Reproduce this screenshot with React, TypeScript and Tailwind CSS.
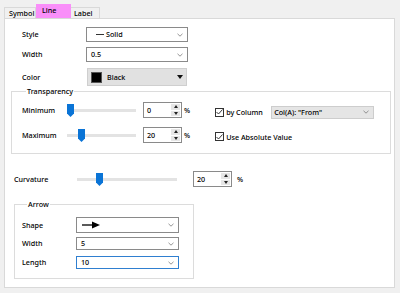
import React from "react";

const Chevron = () => (
  <svg width="6" height="4" viewBox="0 0 6 4" className="shrink-0">
    <path d="M0.5 0.8 L3 3.2 L5.5 0.8" fill="none" stroke="#7a7a7a" strokeWidth="0.8" />
  </svg>
);

function Dropdown({ w, h, children, focused }: { w: string; h: string; children: React.ReactNode; focused?: boolean }) {
  return (
    <div
      className={`flex items-center justify-between bg-white border pl-[3px] pr-[4px] ${w} ${h} ${
        focused ? "border-[#2f7fd0]" : "border-[#8a8a8a]"
      }`}
    >
      <div className="flex items-center">{children}</div>
      <Chevron />
    </div>
  );
}

function Slider({ w, pos }: { w: string; pos: string }) {
  return (
    <div className={`relative h-[16px] flex items-center ${w}`}>
      <div className="w-full h-[3px] bg-[#e3e3e3]" />
      <svg width="7" height="13" viewBox="0 0 7 13" className={`absolute top-[2px] ${pos}`}>
        <path d="M0 0 H7 V9.5 L3.5 13 L0 9.5 Z" fill="#0a74d6" />
      </svg>
    </div>
  );
}

function Spin({ value }: { value: string }) {
  return (
    <div className="flex w-[39px] h-[16px] border border-[#8a8a8a] bg-white">
      <div className="flex-1 pl-[3px] flex items-center">{value}</div>
      <div className="w-[11px] flex flex-col gap-[1px] p-[1px] bg-white">
        <div className="flex-1 bg-[#e6e6e6] flex items-center justify-center">
          <svg width="4" height="3" viewBox="0 0 4 3">
            <path d="M0 3 L2 0 L4 3 Z" fill="#222" />
          </svg>
        </div>
        <div className="flex-1 bg-[#e6e6e6] flex items-center justify-center">
          <svg width="4" height="3" viewBox="0 0 4 3">
            <path d="M0 0 L2 3 L4 0 Z" fill="#222" />
          </svg>
        </div>
      </div>
    </div>
  );
}

const Check = () => (
  <div className="w-[9px] h-[9px] border border-[#333] bg-white flex items-center justify-center shrink-0">
    <svg width="7" height="6" viewBox="0 0 7 6">
      <path d="M0.5 3 L2.5 5 L6.5 0.5" fill="none" stroke="#222" strokeWidth="0.9" />
    </svg>
  </div>
);

export default function App() {
  return (
    <div className="w-[400px] h-[293px] bg-[#f0f0f0] overflow-hidden text-[7.2px] font-medium text-black font-['Noto_Sans','Open_Sans',sans-serif]">
      {/* tabs */}
      <div className="flex items-end h-[18px] pl-[4px]">
        <div className="w-[32px] h-[11px] border border-b-0 border-[#d9d9d9] pl-[4px] leading-[10px]">Symbol</div>
        <div className="w-[35px] h-[14px] bg-[#f98ff9] pl-[6px] leading-[12px]">Line</div>
        <div className="w-[29px] h-[11px] border border-b-0 border-l-0 border-[#d9d9d9] pl-[3px] leading-[10px]">Label</div>
      </div>

      {/* panel */}
      <div className="ml-[4px] w-[391px] h-[270px] border border-[#d9d9d9] bg-white">
        <div className="pl-[17px]">
          <div className="mt-[8px] flex items-center">
            <div className="w-[64px]">Style</div>
            <Dropdown w="w-[102px]" h="h-[15px]">
              <div className="ml-[6px] w-[8px] h-px bg-[#333]" />
              <span className="ml-[2px]">Solid</span>
            </Dropdown>
          </div>
          <div className="mt-[5px] flex items-center">
            <div className="w-[64px]">Width</div>
            <Dropdown w="w-[102px]" h="h-[15px]">
              <span className="ml-px">0.5</span>
            </Dropdown>
          </div>
          <div className="mt-[6px] flex items-center">
            <div className="w-[65px]">Color</div>
            <div className="w-[100px] h-[18px] bg-[#e1e1e1] border border-[#cfcfcf] flex items-center pl-[3px] pr-[3px]">
              <div className="w-[11px] h-[11px] bg-black border border-[#555]" />
              <span className="ml-[5px] flex-1">Black</span>
              <svg width="6" height="4" viewBox="0 0 6 4">
                <path d="M0 0 H6 L3 4 Z" fill="#111" />
              </svg>
            </div>
          </div>
        </div>

        <fieldset className="ml-[6px] mr-[3px] border border-[#dcdcdc] pl-[10px] pb-[10px]">
          <legend className="ml-[4px] px-px leading-[11px]">Transparency</legend>
          <div className="mt-[5px] flex items-center h-[16px]">
            <div className="w-[45px]">Minimum</div>
            <Slider w="w-[69px]" pos="left-0" />
            <div className="ml-[7px]">
              <Spin value="0" />
            </div>
            <span className="ml-[2px]">%</span>
            <div className="ml-[25px] mt-[4px] flex items-center">
              <Check />
              <span className="ml-[2px] w-[45px]">by Column</span>
              <div className="w-[103px] h-[13px] bg-[#e5e5e5] border border-[#cdcdcd] flex items-center justify-between pl-[2px] pr-[4px]">
                <span>Col(A): "From"</span>
                <Chevron />
              </div>
            </div>
          </div>
          <div className="mt-[9px] flex items-center h-[16px]">
            <div className="w-[45px]">Maximum</div>
            <Slider w="w-[69px]" pos="left-[11px]" />
            <div className="ml-[7px]">
              <Spin value="20" />
            </div>
            <span className="ml-[2px]">%</span>
            <div className="ml-[25px] mt-[4px] flex items-center">
              <Check />
              <span className="ml-[2px]">Use Absolute Value</span>
            </div>
          </div>
        </fieldset>

        <div className="ml-[9px] mt-[17px] flex items-center h-[16px]">
          <div className="w-[63px]">Curvature</div>
          <Slider w="w-[100px]" pos="left-[19px]" />
          <div className="ml-[16px]">
            <Spin value="20" />
          </div>
          <span className="ml-[5px]">%</span>
        </div>

        <fieldset className="ml-[9px] mt-[12px] w-[180px] border border-[#dcdcdc] pl-[7px] pb-[9px]">
          <legend className="ml-[5px] px-px leading-[11px]">Arrow</legend>
          <div className="mt-[7px] flex items-center">
            <div className="w-[54px]">Shape</div>
            <Dropdown w="w-[103px]" h="h-[16px]">
              <svg width="18" height="8" viewBox="0 0 18 8" className="ml-[2px]">
                <path d="M0 4 H12" stroke="#000" strokeWidth="1.3" />
                <path d="M10 0.5 L18 4 L10 7.5 Z" fill="#000" />
              </svg>
            </Dropdown>
          </div>
          <div className="mt-[4px] flex items-center">
            <div className="w-[54px]">Width</div>
            <Dropdown w="w-[103px]" h="h-[13px]">
              <span className="ml-px">5</span>
            </Dropdown>
          </div>
          <div className="mt-[6px] flex items-center">
            <div className="w-[54px]">Length</div>
            <Dropdown w="w-[103px]" h="h-[13px]" focused>
              <span className="ml-px">10</span>
            </Dropdown>
          </div>
        </fieldset>
      </div>
    </div>
  );
}
